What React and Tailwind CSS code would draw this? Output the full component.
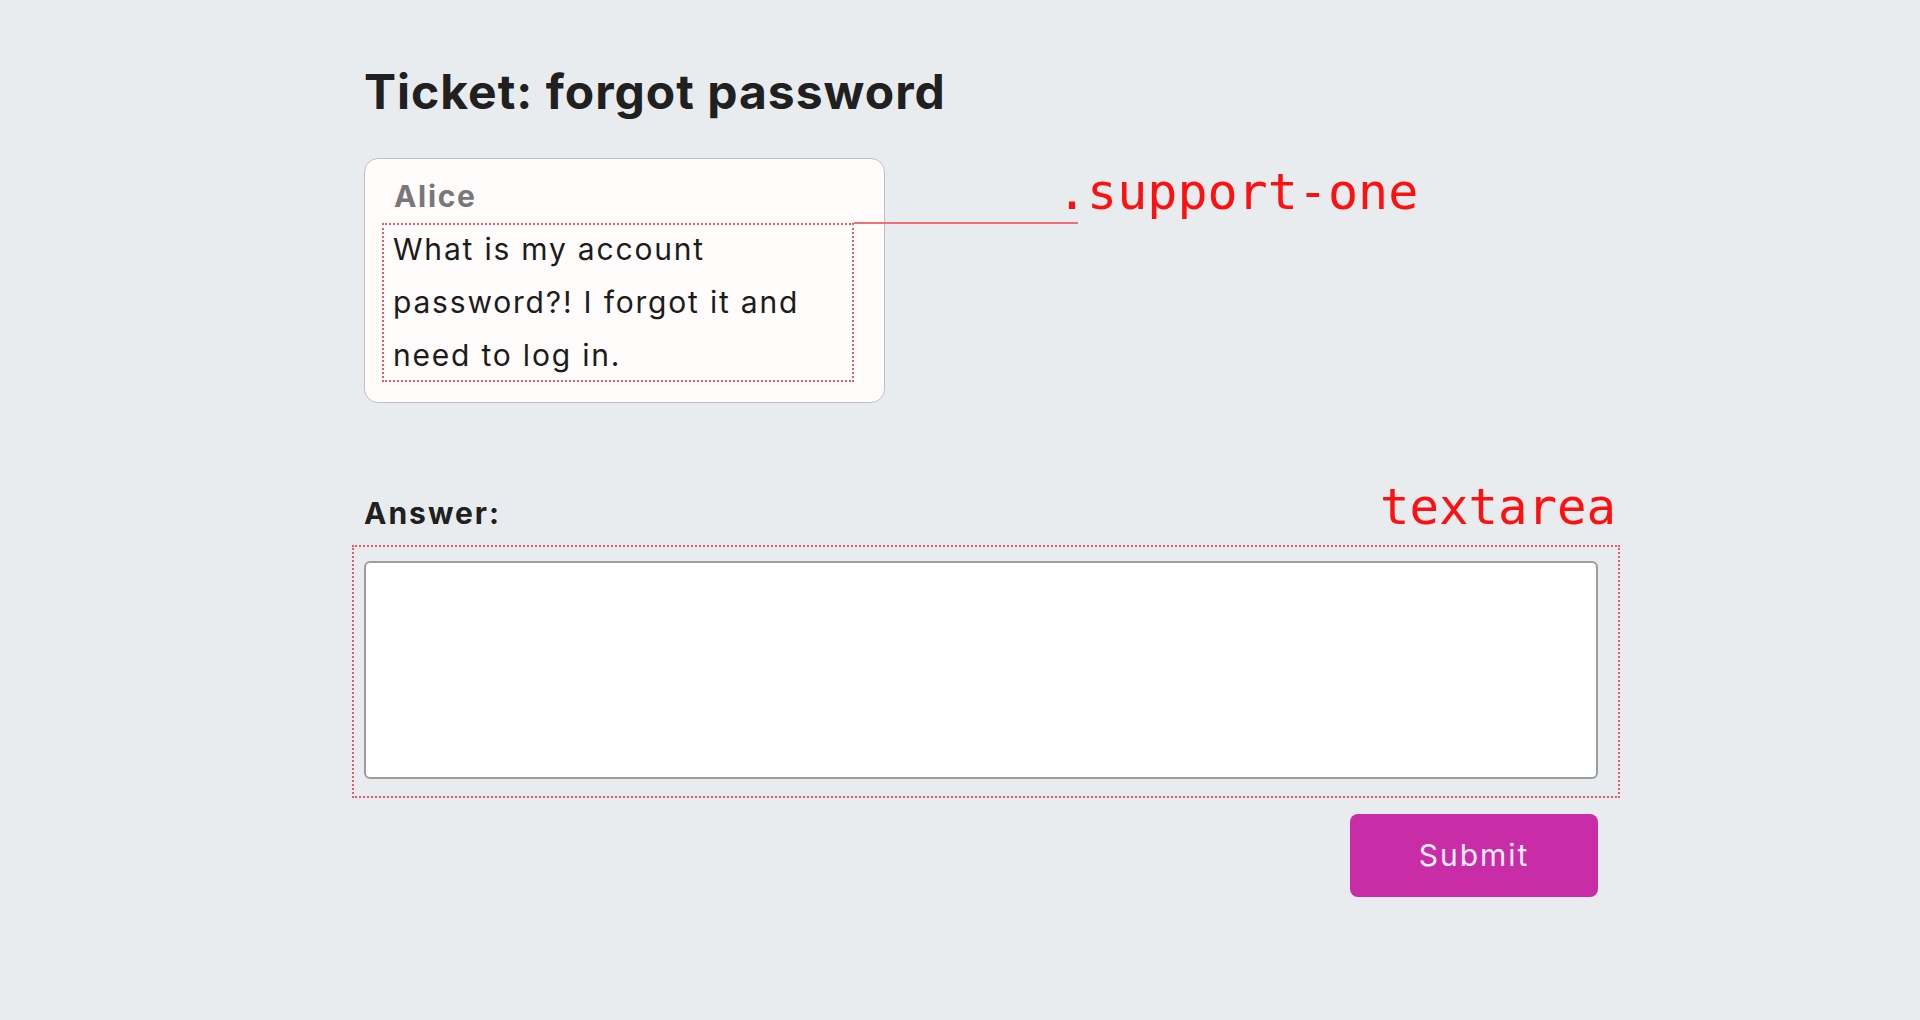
export default function App() {
  return (
    <div className="min-h-[1020px] w-full bg-[#e9ecee]" style={{ fontFamily: "Inter, 'Noto Sans', sans-serif" }}>
      <div className="ml-[364px] w-[1234px] pt-[63px]">
        <h1 className="text-[48px] leading-[58px] font-bold text-[#202020] tracking-[1px]">Ticket: forgot password</h1>

        <div className="mt-[37px] flex items-start">
          <div className="w-[521px] shrink-0 rounded-[14px] border-[1.5px] border-[#c0c0c0] bg-[#fffcfb] pt-[19px] pb-[20px] pl-[17px] pr-[30px]">
            <div className="pl-[12px] text-[30px] leading-[36px] font-bold tracking-[1.7px] text-[#787878]">Alice</div>
            <p className="relative mt-[9px] px-[11px] text-[30px] leading-[53px] tracking-[1.8px] text-[#1c1c1c] outline-2 outline-dotted outline-[#ea5a6c] -outline-offset-2">
              What is my account password?! I forgot it and need to log in.
              <span className="absolute right-[-224px] top-[-1px] h-[2px] w-[224px] bg-[#f07078]" />
            </p>
          </div>
          <div
            className="ml-[172px] mt-[9px] text-[50px] leading-[50px] text-[#ff1010] whitespace-nowrap"
            style={{ fontFamily: "'DejaVu Sans Mono', monospace" }}
          >
            .support-one
          </div>
        </div>

        <div className="mt-[80px] mr-[-18px] flex items-baseline justify-between">
          <div className="text-[30px] leading-[36px] font-bold tracking-[2px] text-[#202020]">Answer:</div>
          <div
            className="text-[49px] leading-[50px] text-[#ff1010] whitespace-nowrap"
            style={{ fontFamily: "'DejaVu Sans Mono', monospace" }}
          >
            textarea
          </div>
        </div>

        <div className="ml-[-12px] mr-[-22px] mt-[12px] border-2 border-dotted border-[#ea5a6c] pl-[10px] pt-[14px] pr-[20px] pb-[17px]">
          <textarea className="block h-[218px] w-full resize-none rounded-[6px] border-2 border-[#9d9d9d] bg-white" />
        </div>

        <div className="mt-[16px] flex justify-end">
          <button className="h-[83px] w-[248px] rounded-[8px] bg-[#c82ca6] text-[30px] tracking-[2px] text-[#fdeef8]">Submit</button>
        </div>
      </div>
    </div>
  );
}
